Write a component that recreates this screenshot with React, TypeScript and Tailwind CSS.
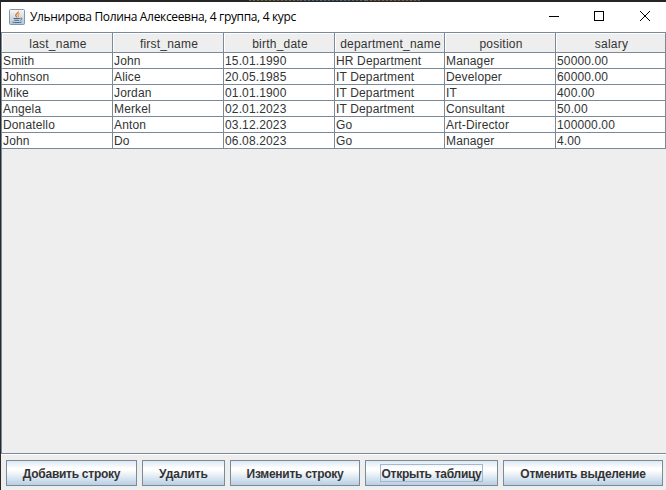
const headers = ["last_name", "first_name", "birth_date", "department_name", "position", "salary"];

const rows = [
  ["Smith", "John", "15.01.1990", "HR Department", "Manager", "50000.00"],
  ["Johnson", "Alice", "20.05.1985", "IT Department", "Developer", "60000.00"],
  ["Mike", "Jordan", "01.01.1900", "IT Department", "IT", "400.00"],
  ["Angela", "Merkel", "02.01.2023", "IT Department", "Consultant", "50.00"],
  ["Donatello", "Anton", "03.12.2023", "Go", "Art-Director", "100000.00"],
  ["John", "Do", "06.08.2023", "Go", "Manager", "4.00"],
];

const columns = "grid grid-cols-[111px_111px_111px_110px_111px_110px]";

const buttons = [
  { label: "Добавить строку", box: "w-[131px] tracking-[-0.27px]", focused: false },
  { label: "Удалить", box: "w-[83px] tracking-[-0.05px]", focused: false },
  { label: "Изменить строку", box: "w-[130px] tracking-[-0.27px]", focused: false },
  { label: "Открыть таблицу", box: "w-[133px] tracking-[-0.27px]", focused: true },
  { label: "Отменить выделение", box: "w-[160px] tracking-[-0.22px]", focused: false },
];

function JavaIcon() {
  return (
    <svg width="16" height="16" viewBox="0 0 16 16" fill="none">
      <defs>
        <linearGradient id="tile" x1="0" y1="0" x2="0" y2="1">
          <stop offset="0" stopColor="#f4f7f9" />
          <stop offset="1" stopColor="#b5c6d4" />
        </linearGradient>
      </defs>
      <rect x="0.5" y="0.5" width="15" height="15" rx="1" fill="url(#tile)" stroke="#8296a8" />
      <path d="M9.3 2.500c.5 1.600-2.900 2.300-2.600 3.900.2.800 1 1.100 1.100 2" stroke="#e8741c" strokeWidth="1.400" />
      <path d="M10.500 4.700c-1.500.6-2 1.300-1.200 2.100.4.500.2 1-.3 1.400" stroke="#e8741c" />
      <path d="M4.500 9.500h6.300M5.200 11.300h5M3.500 13.200c2.300.5 6.600.5 9-.1M11.300 9.200c2-.5 2.400 1.300.1 2.100" stroke="#426a91" strokeWidth="1" />
    </svg>
  );
}

export default function App() {
  return (
    <div className="flex h-[490px] w-[666px] flex-col overflow-hidden bg-[#eeeeee] font-['Liberation_Sans',Arial,sans-serif] text-[12px] text-[#333333]">
      <div className="flex h-[2px] shrink-0 bg-[#252526] pl-[249px]">
        <div className="h-px w-[51px] bg-[repeating-linear-gradient(90deg,#75653f_0px,#75653f_2px,#353230_2px,#353230_4px)]" />
        <div className="h-px w-[66px] bg-[repeating-linear-gradient(90deg,#536678_0px,#536678_2px,#2c3033_2px,#2c3033_4px)]" />
        <div className="h-px w-[54px] bg-[repeating-linear-gradient(90deg,#75653f_0px,#75653f_2px,#353230_2px,#353230_4px)]" />
      </div>
      <div className="flex h-[488px] flex-col border-l border-[#29292b]">
        <header className="flex h-[30px] shrink-0 items-center bg-white pl-2 text-black">
          <JavaIcon />
          <h1 className="ml-[5px] whitespace-nowrap font-['Open_Sans','Noto_Sans',sans-serif] text-[12px] leading-4 tracking-[-0.34px]">
            Ульнирова Полина Алексеевна, 4 группа, 4 курс
          </h1>
          <svg className="ml-auto" width="120" height="30" viewBox="0 0 120 30" fill="none" stroke="#000" shapeRendering="crispEdges">
            <path d="M3 14.500h10" />
            <rect x="48.500" y="9.500" width="9" height="9" />
            <path d="M94 9l10 10M104 9l-10 10" shapeRendering="auto" />
          </svg>
        </header>
        <main className="flex h-[422px] shrink-0 flex-col border-t border-b border-l border-[#7a8a99]">
          <div className={`${columns} h-5 shrink-0`}>
            {headers.map((name) => (
              <div key={name} className="border-r border-b border-[#7a8a99] bg-[#eeeeee]">
                <div className="h-[19px] border-t border-l border-white pt-px pl-px text-center leading-[18px] tracking-[0.22px]">{name}</div>
              </div>
            ))}
          </div>
          {rows.map((row, i) => (
            <div key={i} className={`${columns} h-4 shrink-0 bg-white`}>
              {row.map((value, j) => (
                <div key={j} className="h-4 whitespace-nowrap border-r border-b border-[#7a8a99] pl-px leading-[17px] tracking-[0.14px]">
                  {value}
                </div>
              ))}
            </div>
          ))}
        </main>
        <footer className="flex h-9 shrink-0 gap-[5px] border-t border-white pt-[5px] pl-[5px]">
          {buttons.map((b) => (
            <button
              key={b.label}
              className={`${b.box} flex h-[26px] shrink-0 items-center justify-center whitespace-nowrap border border-[#7a8a99] bg-[linear-gradient(180deg,#dde8f3_0%,#ffffff_30%,#ffffff_38%,#b8cfe5_100%)] font-bold`}
            >
              <span className={`h-4 leading-[18px] ${b.focused ? "outline outline-[#a3b8cc]" : ""}`}>{b.label}</span>
            </button>
          ))}
        </footer>
      </div>
    </div>
  );
}
